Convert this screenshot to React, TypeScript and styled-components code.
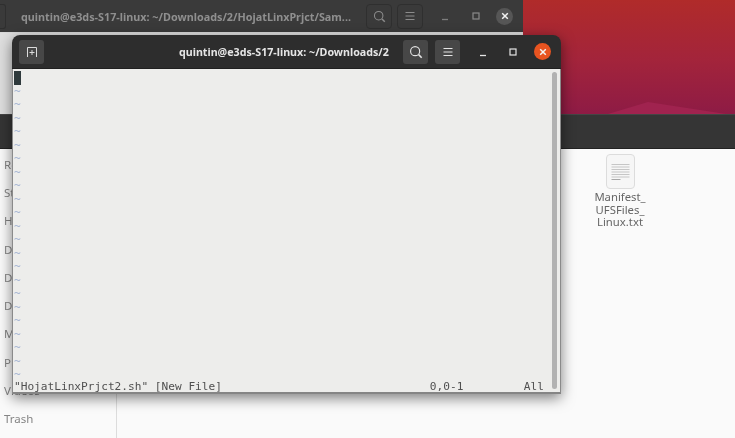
import styled, { createGlobalStyle } from 'styled-components';

const GlobalStyle = createGlobalStyle`
  html, body {
    margin: 0;
    padding: 0;
    background: #8e1a40;
  }
  * {
    box-sizing: border-box;
  }
`;

const Desktop = styled.div`
  position: relative;
  width: 735px;
  height: 438px;
  overflow: hidden;
  font-family: 'Noto Sans', 'Open Sans', sans-serif;
  background: linear-gradient(180deg, #b02b2a 0, #a3243b 60px, #8e1b45 114px);
  filter: blur(0.55px);
`;

const WallpaperPeak = styled.svg`
  position: absolute;
  left: 600px;
  top: 98px;
`;

/* windows sit on a free desktop, so these three are placed by coordinates */
const FilesWindow = styled.section`
  position: absolute;
  left: 0;
  top: 114px;
  width: 735px;
  height: 324px;
  display: flex;
  flex-direction: column;
  background: #fafafa;
`;

const FilesHeader = styled.header`
  height: 35px;
  flex: none;
  background: #353535;
  border-top: 1px solid #454545;
  border-bottom: 1px solid #222;
`;

const FilesBody = styled.div`
  flex: 1;
  display: flex;
  min-height: 0;
`;

const Sidebar = styled.nav`
  width: 117px;
  flex: none;
  padding-top: 1px;
  display: flex;
  flex-direction: column;
  border-right: 1px solid #dcdcdc;
`;

const SidebarItem = styled.div`
  height: 28.3px;
  padding-left: 4px;
  display: flex;
  align-items: center;
  font-size: 11.5px;
  color: #858585;
`;

const FileArea = styled.div`
  flex: 1;
  padding: 5px 0 0 463px;
`;

const FileItem = styled.div`
  width: 80px;
  display: flex;
  flex-direction: column;
  align-items: center;
`;

const FileName = styled.div`
  margin-top: 2px;
  font-size: 11.3px;
  line-height: 12.6px;
  text-align: center;
  color: #666;
`;

const BackTerminal = styled.section`
  position: absolute;
  left: 0;
  top: 0;
  width: 523px;
  height: 114px;
  background: #dedede;
`;

const BackBar = styled.header`
  height: 33px;
  display: flex;
  align-items: center;
  padding-right: 6px;
  background: #3a3a3a;
  border-bottom: 1px solid #d8d8d8;
`;

const BackEdgeButton = styled.div`
  width: 6px;
  height: 25px;
  flex: none;
  border: 1px solid #2f2f2f;
  border-left: none;
  border-radius: 0 3px 3px 0;
`;

const BackTitle = styled.div`
  width: 329px;
  margin-left: 15px;
  flex: none;
  font-size: 10.8px;
  font-weight: 700;
  white-space: nowrap;
  color: #8f8f8f;
`;

const BackButton = styled.div<{ $gap: number }>`
  width: 26px;
  height: 25px;
  flex: none;
  display: flex;
  align-items: center;
  justify-content: center;
  margin-left: ${(props) => props.$gap}px;
  border: 1px solid #2f2f2f;
  border-radius: 4px;
  color: #8c8c8c;
`;

const WindowControl = styled.div<{ $gap: number; $bg?: string }>`
  width: 17px;
  height: 17px;
  flex: none;
  display: flex;
  align-items: center;
  justify-content: center;
  margin-left: ${(props) => props.$gap}px;
  border-radius: 50%;
  background: ${(props) => props.$bg || 'transparent'};
`;

const FrontTerminal = styled.section`
  position: absolute;
  left: 12px;
  top: 35px;
  width: 549px;
  height: 359px;
  display: flex;
  flex-direction: column;
  border-radius: 8px 8px 0 0;
  box-shadow: 0 4px 14px rgba(0, 0, 0, 0.5);
`;

const FrontBar = styled.header`
  height: 34px;
  flex: none;
  display: flex;
  align-items: center;
  padding: 0 9px 0 7px;
  background: #2d2d2d;
  border-radius: 8px 8px 0 0;
  border-bottom: 1px solid #202020;
`;

const FrontButton = styled.div<{ $gap: number }>`
  width: 25px;
  height: 24px;
  flex: none;
  display: flex;
  align-items: center;
  justify-content: center;
  margin-left: ${(props) => props.$gap}px;
  background: #474747;
  border-radius: 3px;
  color: #e4e4e4;
`;

const FrontTitle = styled.div`
  width: 211px;
  flex: none;
  margin-left: 135px;
  font-size: 10.7px;
  font-weight: 700;
  white-space: nowrap;
  color: #e6e6e6;
`;

const TerminalBody = styled.div`
  flex: 1;
  position: relative;
  min-height: 0;
  padding: 2px 0 0 1px;
  background: #ededeb;
  border-left: 1px solid #8a8a8a;
  border-right: 1px solid #8a8a8a;
  border-bottom: 2px solid #858585;
`;

const VimRow = styled.div`
  height: 13.5px;
  font-family: 'DejaVu Sans Mono', 'Liberation Mono', monospace;
  font-size: 11.15px;
  line-height: 13.5px;
  white-space: pre;
  color: #505050;
`;

const Tilde = styled(VimRow)`
  color: #a3b3d2;
`;

const StatusRow = styled(VimRow)`
  margin-top: -2px;
`;

const Cursor = styled.div`
  width: 7px;
  height: 14px;
  background: #2f3a3c;
`;

const Scrollbar = styled.div`
  position: absolute;
  top: 3px;
  right: 3px;
  bottom: 3px;
  width: 5px;
  border-radius: 3px;
  background: #b2b2b2;
`;

const sidebarLabels = ['Recent', 'Starred', 'Home', 'Desktop', 'Documents', 'Downloads', 'Music', 'Pictures', 'Videos', 'Trash'];
const tildeRows = Array.from({ length: 22 }, (_, i) => i);

const SearchIcon = ({ size = 14 }: { size?: number }) => (
  <svg width={size} height={size} viewBox="0 0 16 16" fill="none" stroke="currentColor" strokeWidth="1.3">
    <circle cx="7" cy="7" r="5.2" />
    <path d="M11 11l3.5 3.5" strokeWidth="1.8" />
  </svg>
);

const MenuIcon = () => (
  <svg width="12" height="12" viewBox="0 0 12 12" stroke="currentColor" strokeWidth="1.1">
    <path d="M1.5 2.5h9M1.5 6h9M1.5 9.5h9" />
  </svg>
);

const MinimizeIcon = ({ color }: { color: string }) => (
  <svg width="10" height="10" viewBox="0 0 10 10" stroke={color} strokeWidth="1.3">
    <path d="M2 8.5h6" />
  </svg>
);

const MaximizeIcon = ({ color }: { color: string }) => (
  <svg width="10" height="10" viewBox="0 0 10 10" fill="none" stroke={color} strokeWidth="1.2">
    <rect x="2" y="2" width="6" height="6" />
  </svg>
);

const CloseIcon = () => (
  <svg width="8" height="8" viewBox="0 0 8 8" stroke="#f4f4f4" strokeWidth="1.5">
    <path d="M1.2 1.2l5.6 5.6M6.8 1.2L1.2 6.8" />
  </svg>
);

const NewTabIcon = () => (
  <svg width="12" height="12" viewBox="0 0 12 12" fill="none" stroke="#dcdcdc" strokeWidth="1">
    <path d="M1.5 11V1.5h9V11" />
    <path d="M6 4v5M3.5 6.5h5" />
  </svg>
);

const TextFileIcon = () => (
  <svg width="29" height="35" viewBox="0 0 29 35">
    <rect x="0.5" y="0.5" width="28" height="34" rx="3.5" fill="#f6f6f6" stroke="#dcdcdc" />
    <path d="M5.5 10.5h18M5.5 13h18M5.5 15.5h18M5.5 18h18M5.5 20.5h18M5.5 23h18" stroke="#c6c6c6" />
    <path d="M5.5 25.5h9" stroke="#a8a8a8" />
  </svg>
);

export default function App() {
  return (
    <>
      <GlobalStyle />
      <Desktop>
        <WallpaperPeak width="135" height="16" viewBox="0 0 135 16">
          <path d="M8 16L48 4l78 12z" fill="#a0234f" />
        </WallpaperPeak>

        <FilesWindow>
          <FilesHeader />
          <FilesBody>
            <Sidebar>
              {sidebarLabels.map((label) => (
                <SidebarItem key={label}>{label}</SidebarItem>
              ))}
            </Sidebar>
            <FileArea>
              <FileItem>
                <TextFileIcon />
                <FileName>
                  Manifest_
                  <br />
                  UFSFiles_
                  <br />
                  Linux.txt
                </FileName>
              </FileItem>
            </FileArea>
          </FilesBody>
        </FilesWindow>

        <BackTerminal>
          <BackBar>
            <BackEdgeButton />
            <BackTitle>quintin@e3ds-S17-linux: ~/Downloads/2/HojatLinxPrjct/Sam...</BackTitle>
            <BackButton $gap={16}>
              <SearchIcon size={13} />
            </BackButton>
            <BackButton $gap={5}>
              <MenuIcon />
            </BackButton>
            <WindowControl $gap={13}>
              <MinimizeIcon color="#7d7d7d" />
            </WindowControl>
            <WindowControl $gap={14}>
              <MaximizeIcon color="#8a8a8a" />
            </WindowControl>
            <WindowControl $gap={12} $bg="#565656">
              <CloseIcon />
            </WindowControl>
          </BackBar>
        </BackTerminal>

        <FrontTerminal>
          <FrontBar>
            <FrontButton $gap={0}>
              <NewTabIcon />
            </FrontButton>
            <FrontTitle>quintin@e3ds-S17-linux: ~/Downloads/2</FrontTitle>
            <FrontButton $gap={13}>
              <SearchIcon />
            </FrontButton>
            <FrontButton $gap={7}>
              <MenuIcon />
            </FrontButton>
            <WindowControl $gap={14}>
              <MinimizeIcon color="#e4e4e4" />
            </WindowControl>
            <WindowControl $gap={13}>
              <MaximizeIcon color="#e4e4e4" />
            </WindowControl>
            <WindowControl $gap={13} $bg="#e95420">
              <CloseIcon />
            </WindowControl>
          </FrontBar>
          <TerminalBody>
            <VimRow>
              <Cursor />
            </VimRow>
            {tildeRows.map((row) => (
              <Tilde key={row}>~</Tilde>
            ))}
            <StatusRow>{'"HojatLinxPrjct2.sh" [New File]                               0,0-1         All'}</StatusRow>
            <Scrollbar />
          </TerminalBody>
        </FrontTerminal>
      </Desktop>
    </>
  );
}
